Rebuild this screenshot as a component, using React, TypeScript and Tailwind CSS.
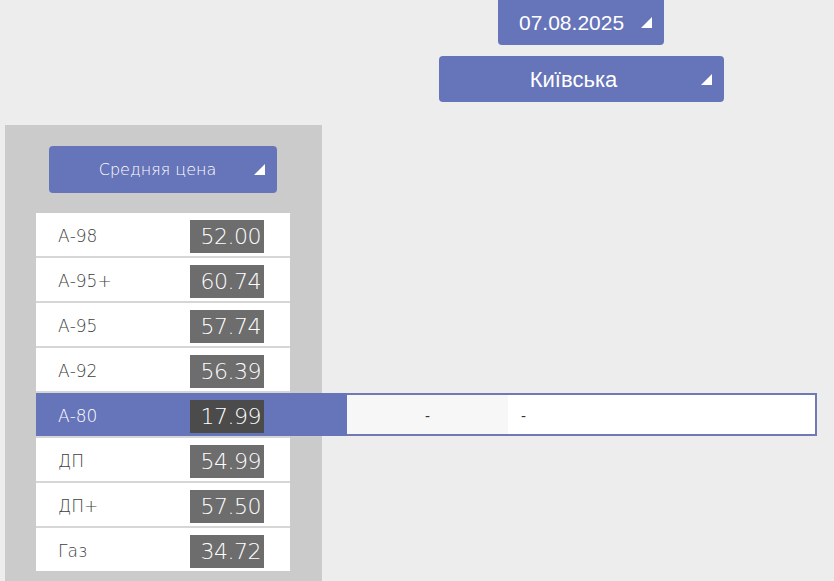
import React from "react";

const fuels = [
  { name: "А-98", price: "52.00" },
  { name: "А-95+", price: "60.74" },
  { name: "А-95", price: "57.74" },
  { name: "А-92", price: "56.39" },
  { name: "А-80", price: "17.99", active: true },
  { name: "ДП", price: "54.99" },
  { name: "ДП+", price: "57.50" },
  { name: "Газ", price: "34.72" },
];

function Corner() {
  return (
    <svg width="11" height="11" viewBox="0 0 11 11" className="shrink-0">
      <polygon points="0,11 11,11 11,0" fill="white" />
    </svg>
  );
}

export default function App() {
  const gothic = { fontFamily: '"DejaVu Sans", "Open Sans", sans-serif' };
  return (
    <div className="w-[834px] h-[581px] overflow-hidden bg-[#ededed] flex flex-col" style={{ fontFamily: '"Liberation Sans", Arial, sans-serif' }}>
      <div className="pl-[328px] flex flex-col items-center gap-[11px]">
        <button className="w-[166px] h-[45px] rounded-b-[4px] bg-[#6674b9] text-white text-[21px] flex items-center pl-[21px] pr-[12px] justify-between">
          <span>07.08.2025</span>
          <Corner />
        </button>
        <button className="w-[285px] h-[46px] rounded-[4px] bg-[#6674b9] text-white text-[22px] flex items-center pr-[12px]">
          <span className="flex-1 text-center pl-[8px]">Київська</span>
          <Corner />
        </button>
      </div>

      <div className="ml-[5px] mt-[23px] w-[317px] flex-1 bg-[#cbcbcb] flex flex-col pt-[21px]" style={gothic}>
        <button className="ml-[44px] w-[228px] h-[47px] rounded-[4px] bg-[#6674b9] text-white text-[16px] font-extralight flex items-center pr-[12px]">
          <span className="flex-1 text-center pl-[12px] pt-[1px]">Средняя цена</span>
          <Corner />
        </button>

        <div className="ml-[31px] mt-[20px] w-[254px] flex flex-col gap-[2px] bg-[#d6d6d6]">
          {fuels.map((f) => (
            <div
              key={f.name}
              className={
                f.active
                  ? "relative h-[43px] bg-[#6674b9] flex items-center justify-between pl-[22px] pr-[26px]"
                  : "h-[43px] bg-white flex items-center justify-between pl-[22px] pr-[26px]"
              }
            >
              <span className={f.active ? "pt-[4px] text-[17px] font-extralight text-white" : "pt-[4px] text-[17px] font-extralight text-[#3f3f3f]"}>
                {f.name}
              </span>
              <span
                className={
                  f.active
                    ? "mt-[3px] w-[74px] h-[33px] bg-[#4b4b4b] text-white text-[22px] font-extralight flex items-center justify-end pr-[3px] tracking-[-0.5px]"
                    : "mt-[3px] w-[74px] h-[33px] bg-[#6d6d6d] text-white text-[22px] font-extralight flex items-center justify-end pr-[3px] tracking-[-0.5px]"
                }
              >
                {f.price}
              </span>
              {f.active && (
                <div className="absolute left-full top-0 h-[43px] flex">
                  <div className="w-[57px] h-full bg-[#6674b9]" />
                  <div className="w-[470px] h-full border-2 border-l-0 border-[#7179b5] flex text-[15px] text-[#333]" style={{ fontFamily: '"Liberation Sans", Arial, sans-serif' }}>
                    <div className="w-[161px] h-full bg-[#f7f7f7] flex items-center justify-center pt-[3px]">-</div>
                    <div className="flex-1 h-full bg-white flex items-center pl-[13px] pt-[3px]">-</div>
                  </div>
                </div>
              )}
            </div>
          ))}
        </div>
      </div>
    </div>
  );
}
